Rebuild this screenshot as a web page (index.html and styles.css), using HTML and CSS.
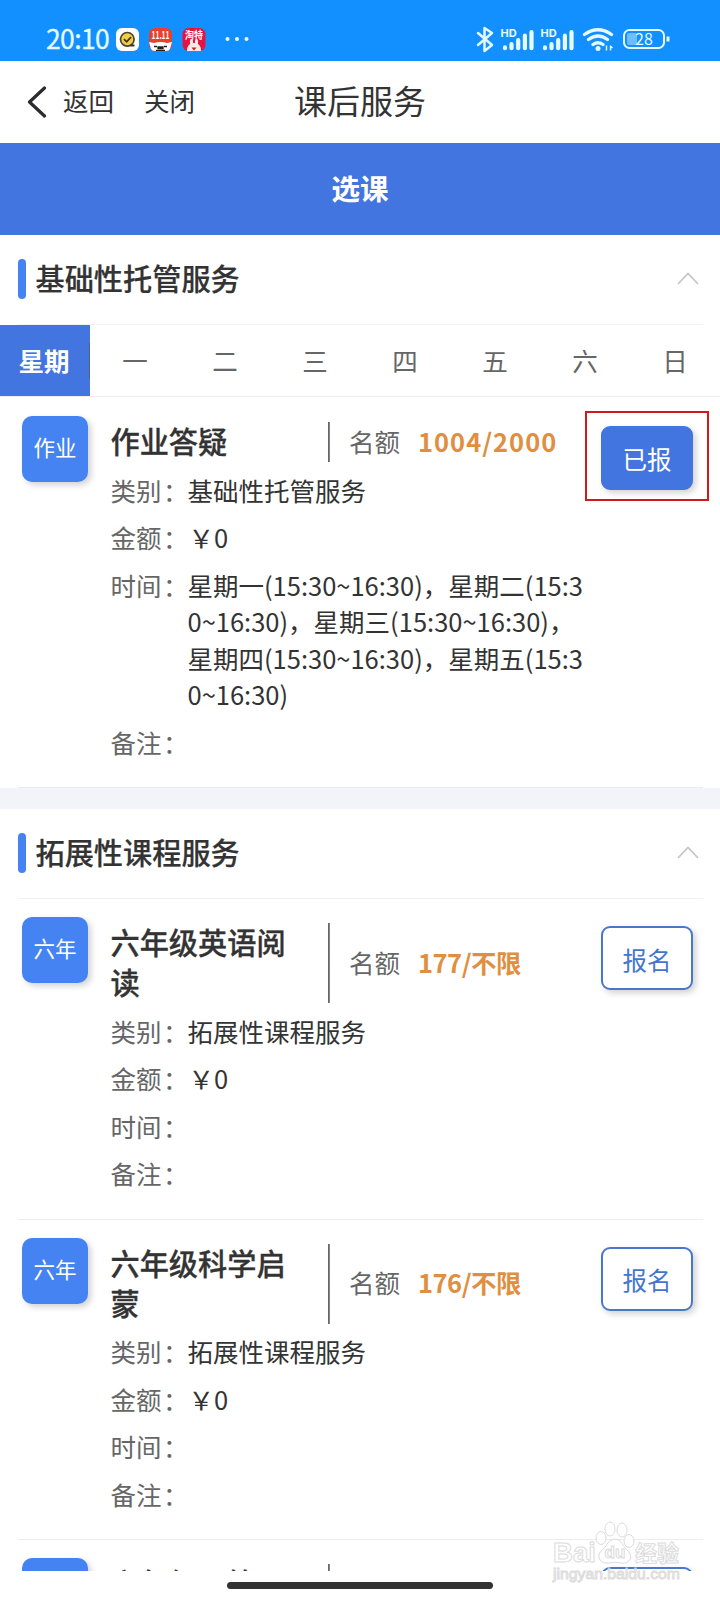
FILE: index.html
```html
<!DOCTYPE html>
<html lang="zh-CN">
<head>
<meta charset="utf-8">
<title>课后服务</title>
<link rel="stylesheet" href="styles.css">
</head>
<body>
<div class="app">
  <header class="status">
    <span class="clock">20:10</span>
    <svg class="notif" width="90" height="24" viewBox="0 0 90 24">
      <rect x="0" y="0" width="23" height="23" rx="6" fill="#fff"/>
      <circle cx="11.3" cy="11.3" r="6.8" fill="#f4cd45" stroke="#4b4631" stroke-width="1.7"/>
      <path d="M8 11.2l2.6 2.6 4.4-4.6M14.5 17.5h4" fill="none" stroke="#3a3626" stroke-width="1.8"/>
      <rect x="33" y="0" width="23" height="23" rx="6" fill="#e8402f"/>
      <text x="44.5" y="11" class="tiny" textLength="18" lengthAdjust="spacingAndGlyphs">11.11</text>
      <path d="M33 14l5 1q6.500-2 13 0l5-1-2 7q-1 2-4 2H39q-3 0-4-2z" fill="#fff"/>
      <path d="M38 18.500h3M48 18.500h3M42 19h5v1.500h-5zM40 22.300h9" stroke="#222" stroke-width="1.300" fill="none"/>
      <rect x="66.500" y="0" width="23" height="23" rx="6" fill="#e5133f"/>
      <text x="78" y="11" class="tiny" textLength="18" lengthAdjust="spacingAndGlyphs">淘特</text>
      <ellipse cx="75.500" cy="14" rx="1.600" ry="3" fill="#fde8e8"/>
      <ellipse cx="80.500" cy="14" rx="1.600" ry="3" fill="#fde8e8"/>
      <path d="M71 23q0-8 7-8t7 8z" fill="#fde8e8"/>
      <path d="M75.500 19.500h5l-2.500 3z" fill="#b22"/>
    </svg>
    <svg class="dots" width="24" height="6" viewBox="0 0 24 6" fill="#eafaff"><circle cx="2.500" cy="3" r="2"/><circle cx="12" cy="3" r="2"/><circle cx="21.500" cy="3" r="2"/></svg>
    <svg class="system" width="196" height="28" viewBox="0 0 196 28" fill="none" stroke="#e4faff">
      <path d="M2 7l14 12-7.500 6V2l7.500 5-14 12" stroke-width="2.500" stroke-linejoin="round" stroke-linecap="round"/>
      <text x="24.500" y="10.500" class="hd">HD</text>
      <path d="M29 22.200v-.8M35.500 22.200v-4M42.200 22.200v-8M48.900 22.200v-12.500M55.500 22.200v-16M69 22.200v-.8M75.500 22.200v-4M82.200 22.200v-8M88.900 22.200v-12.500M95.500 22.200v-16" stroke-width="4.200" stroke-linecap="round"/>
      <text x="64.500" y="10.500" class="hd">HD</text>
      <path d="M108.500 8.500q13.500-9.500 27 0M112.500 13.500q9.500-7 19 0M117 18.500q5-3.500 10 0" stroke-width="3.300" stroke-linecap="round"/>
      <circle cx="122" cy="22.500" r="2.500" fill="#e4faff" stroke="none"/>
      <path d="M130.500 24.500v-5M134.500 19.500v5M134.500 20l2 2" stroke-width="1.400"/>
      <rect x="148" y="4" width="40" height="18" rx="5.500" stroke-width="2"/>
      <rect x="151" y="7" width="10" height="12" rx="2" fill="#6dbdff" stroke="none"/>
      <path d="M192 10.500v5" stroke-width="3"/>
      <text x="168" y="18.500" class="charge">28</text>
    </svg>
  </header>
  <nav class="nav">
    <div class="nav-left">
      <svg width="20" height="32" viewBox="0 0 20 32"><path d="M17.500 2L2.500 16l15 14" fill="none" stroke="#2b2c30" stroke-width="3.200" stroke-linecap="round" stroke-linejoin="round"/></svg>
      <span class="back">返回</span>
      <span class="close">关闭</span>
    </div>
    <h1 class="nav-title">课后服务</h1>
  </nav>
  <main class="content">
    <div class="banner">选课</div>

    <section>
      <div class="section-head">
        <span class="bar"></span><h2 class="section-title">基础性托管服务</h2>
        <svg class="arrow" width="22" height="13" viewBox="0 0 22 13"><path d="M1 12L11 1.500 21 12" fill="none" stroke="#c3c5c9" stroke-width="1.700"/></svg>
      </div>
      <div class="week">
        <span class="day current">星期</span><span class="day">一</span><span class="day">二</span><span class="day">三</span><span class="day">四</span><span class="day">五</span><span class="day">六</span><span class="day">日</span>
      </div>
      <article class="course first">
        <div class="tile">作业</div>
        <div class="info">
          <div class="top"><h3 class="name">作业答疑</h3><div class="quota">名额<b class="count wide">1004/2000</b></div></div>
          <div class="row"><span class="label">类别<i>：</i></span><span>基础性托管服务</span></div>
          <div class="row"><span class="label">金额<i>：</i></span><span class="price">￥0</span></div>
          <div class="row"><span class="label">时间<i>：</i></span><span>星期一(15:30~16:30)，星期二(15:3<br>0~16:30)，星期三(15:30~16:30)，<br>星期四(15:30~16:30)，星期五(15:3<br>0~16:30)</span></div>
          <div class="row"><span class="label">备注<i>：</i></span></div>
        </div>
        <div class="action"><button class="btn done">已报</button><span class="highlight"></span></div>
      </article>
    </section>

    <div class="gap"></div>

    <section>
      <div class="section-head">
        <span class="bar"></span><h2 class="section-title">拓展性课程服务</h2>
        <svg class="arrow" width="22" height="13" viewBox="0 0 22 13"><path d="M1 12L11 1.500 21 12" fill="none" stroke="#c3c5c9" stroke-width="1.700"/></svg>
      </div>
      <article class="course">
        <div class="tile">六年</div>
        <div class="info">
          <div class="top"><h3 class="name">六年级英语阅<br>读</h3><div class="quota">名额<b class="count">177/不限</b></div></div>
          <div class="row"><span class="label">类别<i>：</i></span><span>拓展性课程服务</span></div>
          <div class="row"><span class="label">金额<i>：</i></span><span class="price">￥0</span></div>
          <div class="row"><span class="label">时间<i>：</i></span></div>
          <div class="row"><span class="label">备注<i>：</i></span></div>
        </div>
        <div class="action"><button class="btn">报名</button></div>
      </article>
      <article class="course">
        <div class="tile">六年</div>
        <div class="info">
          <div class="top"><h3 class="name">六年级科学启<br>蒙</h3><div class="quota">名额<b class="count">176/不限</b></div></div>
          <div class="row"><span class="label">类别<i>：</i></span><span>拓展性课程服务</span></div>
          <div class="row"><span class="label">金额<i>：</i></span><span class="price">￥0</span></div>
          <div class="row"><span class="label">时间<i>：</i></span></div>
          <div class="row"><span class="label">备注<i>：</i></span></div>
        </div>
        <div class="action"><button class="btn">报名</button></div>
      </article>
      <article class="course">
        <div class="tile"></div>
        <div class="info">
          <div class="top"><h3 class="name">六年级口算</h3></div>
        </div>
        <div class="action"><button class="btn"></button></div>
      </article>
    </section>
  </main>
  <footer class="home"><span class="home-bar"></span></footer>
  <svg class="watermark" width="136" height="66" viewBox="0 0 136 66">
    <g fill="#fff" stroke="#d6d6d6" stroke-width="1">
      <text x="1" y="42" class="wm-brand" textLength="43" lengthAdjust="spacingAndGlyphs">Bai</text>
      <ellipse cx="49" cy="18" rx="5" ry="6.500"/><ellipse cx="58" cy="9" rx="5" ry="7"/><ellipse cx="70" cy="10" rx="5" ry="7"/><ellipse cx="77" cy="21" rx="5" ry="6.500"/>
      <path d="M63 19q5 0 8 6 2 3 5 6 5 6 1 10-3 3-8 2-6-1.500-12 0-6 1-9-3-3-5 2-10 3-2 5-6 3-5 8-5z"/>
      <text x="63" y="38" class="wm-du">du</text>
      <text x="83" y="41" class="wm-cn">经验</text>
      <text x="1" y="59" class="wm-url" textLength="127" lengthAdjust="spacingAndGlyphs">jingyan.baidu.com</text>
    </g>
  </svg>
</div>
</body>
</html>
```
FILE: styles.css
```css
* { box-sizing: border-box; }
body {
  margin: 0;
  font-family: "Noto Sans CJK SC", sans-serif;
  font-size: 25.5px;
  color: #333;
  background: #fff;
}
h1, h2, h3 { margin: 0; }
.app {
  position: relative;
  width: 720px;
  height: 1600px;
  display: flex;
  flex-direction: column;
  overflow: hidden;
}

/* Phone status bar */
.status {
  flex: none;
  height: 61px;
  background: #1290ff;
  display: flex;
  align-items: flex-start;
  padding: 26px 48px 0 46px;
}
.clock {
  width: 70px;
  margin-top: -2px;
  font-size: 26.5px;
  line-height: 28px;
  letter-spacing: -.6px;
  color: #e4faff;
  -webkit-text-stroke: .3px #e4faff;
}
.notif { margin-top: 2px; }
.dots { margin: 10px 0 0 19px; }
.system { margin-left: auto; }
.tiny { font-size: 10px; font-weight: 700; fill: #fff; stroke: none; text-anchor: middle; }
.hd { font: 700 11px Inter, sans-serif; fill: #e4faff; stroke: none; }
.charge { font-size: 16px; fill: #e4faff; stroke: none; text-anchor: middle; }

/* Navigation */
.nav {
  flex: none;
  height: 82px;
  display: grid;
  grid-template-columns: 1fr auto 1fr;
  align-items: center;
}
.nav-left { display: flex; align-items: center; padding-left: 27px; }
.back, .close { padding-bottom: 6px; }
.back { margin-left: 16px; }
.close { margin-left: 30px; }
.nav-title { padding-bottom: 4px; font-size: 33px; font-weight: 400; }

.content { flex: 1; min-height: 0; overflow: hidden; }
.banner {
  height: 92px;
  line-height: 90px;
  background: #4375e0;
  color: #fff;
  font-size: 28.5px;
  font-weight: 700;
  text-align: center;
}

/* Section heading */
.section-head {
  height: 90px;
  margin: 0 17px 0 18px;
  padding: 0 4px 2px 0;
  border-bottom: 1.500px solid #f1f2f4;
  display: flex;
  align-items: center;
}
.bar { width: 8px; height: 40px; border-radius: 4px; background: #4583f3; }
.section-title {
  margin-left: 9.500px;
  padding-bottom: 4px;
  font-size: 29.2px;
  font-weight: 500;
  -webkit-text-stroke: .2px #333;
}
.arrow { margin-left: auto; }

.week {
  height: 72px;
  display: grid;
  grid-template-columns: repeat(8, 1fr);
  line-height: 69px;
  text-align: center;
  color: #666;
  border-bottom: 1px solid #eee;
}
.day.current {
  padding-right: 2px;
  background: linear-gradient(#536479, #536479) right center / 1px 36px no-repeat #4375e0;
  color: #fff;
  font-weight: 700;
}

/* Course entries */
.course {
  margin: 0 17px 0 18px;
  padding: 24px 10px 25px 4px;
  border-bottom: 1px solid #ebecee;
  display: flex;
  align-items: flex-start;
}
.course.first { padding-top: 25px; }
.tile {
  flex: none;
  width: 66px;
  height: 66px;
  margin-top: -6px;
  border-radius: 10px;
  background: #4583f3;
  box-shadow: 3px 3px 6px rgba(0, 0, 0, .18);
  color: #fff;
  font-size: 21.5px;
  line-height: 62px;
  text-align: center;
}
.info { width: 490px; margin-left: 22.500px; }
.top {
  display: flex;
  align-items: stretch;
  background: linear-gradient(#666, #666) 217.500px 0 / 1.800px 100% no-repeat;
}
.name {
  width: 219px;
  margin: -2px 0 2px;
  font-size: 29.2px;
  font-weight: 500;
  line-height: 40px;
  white-space: nowrap;
  -webkit-text-stroke: .3px #333;
}
.quota { margin-left: 19.500px; display: flex; align-items: center; color: #666; line-height: 34px; padding-bottom: 3px; }
.count { margin-left: 18px; color: #e08f41; letter-spacing: -.5px; }
.count.wide { letter-spacing: 1px; }
.row { display: flex; padding: 9.500px 0 1.500px; line-height: 36.6px; white-space: nowrap; }
.label { flex: none; width: 77px; color: #666; }
.label i { font-style: normal; margin-left: 1.500px; }
.price { padding-left: 1px; }
.action { position: relative; margin-left: auto; margin-top: 3px; }
.course.first .action { margin-top: 4px; }
.btn {
  display: block;
  width: 92px;
  height: 64px;
  padding: 2px 0 0;
  border: 2px solid #4a77c8;
  border-radius: 9px;
  background: #fff;
  color: #4375d0;
  font: 24.5px "Noto Sans CJK SC", sans-serif;
  box-shadow: 3px 3px 6px rgba(0, 0, 0, .18);
}
.btn.done { padding-top: 1px; background: #4375e0; border-color: #4375e0; color: #fff; }
.highlight {
  position: absolute;
  inset: -15px -16px -11px -16px;
  border: 2px solid #cf1a1c;
}
.gap { height: 21px; background: #f3f4f9; }

/* Gesture area */
.home { flex: none; height: 29px; display: flex; justify-content: center; padding-top: 11px; }
.home-bar { width: 266px; height: 7px; border-radius: 4px; background: #333; }

.watermark { position: absolute; left: 552px; top: 1520px; opacity: .85; }
.wm-brand { font: 700 28px "Liberation Sans", sans-serif; }
.wm-du { font: 700 17px "Liberation Sans", sans-serif; text-anchor: middle; }
.wm-cn { font-size: 22px; font-weight: 700; }
.wm-url { font: 15px "Liberation Sans", sans-serif; }
```
